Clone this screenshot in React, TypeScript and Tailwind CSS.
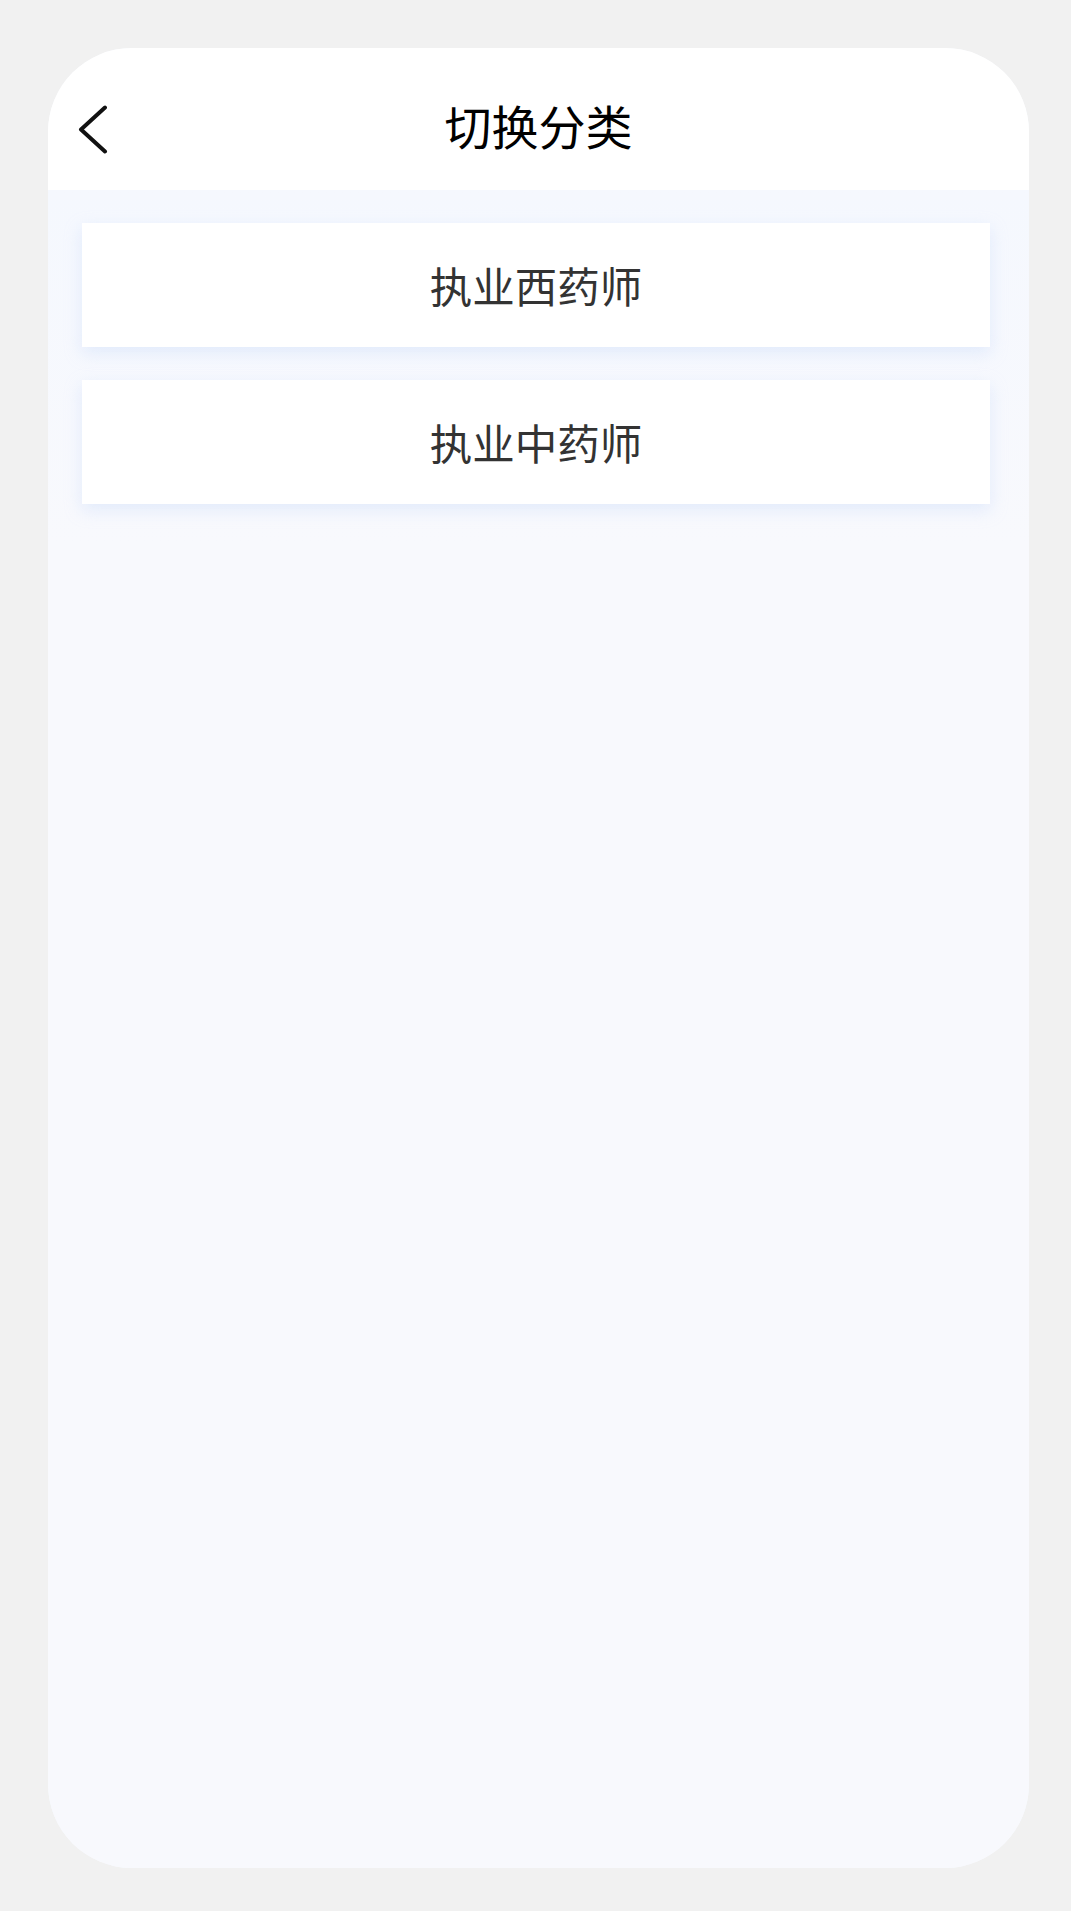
export default function App() {
  const items = ["执业西药师", "执业中药师"];

  return (
    <div
      className="flex min-h-[1911px] w-full bg-[#f1f1f1] px-[48px] py-[48px]"
      style={{ fontFamily: '"Noto Sans CJK SC", "Noto Sans", sans-serif' }}
    >
      <div className="flex h-[1820px] w-[981px] shrink-0 flex-col overflow-hidden rounded-[84px] bg-[#f7f9fe]">
        {/* header */}
        <div className="relative flex h-[142px] shrink-0 items-center justify-center bg-white">
          <button type="button" className="absolute left-[30px] top-[57px] flex h-[50px] w-[32px] items-center justify-center">
            <svg width="32" height="50" viewBox="0 0 32 50" fill="none">
              <path d="M27 2.5 L3 24.5 L27 46.5" stroke="#111" strokeWidth="4" strokeLinecap="round" strokeLinejoin="round" />
            </svg>
          </button>
          <h1 className="pt-[10px] text-[47px] leading-none text-black">切换分类</h1>
        </div>

        {/* list */}
        <div className="flex flex-col gap-[33px] bg-gradient-to-b from-[#f5f8fe] to-[#f8f9fd] pb-[40px] pl-[34px] pr-[39px] pt-[33px]">
          {items.map((item) => (
            <div
              key={item}
              className="flex h-[124px] items-center justify-center bg-white text-[42.5px] leading-none text-[#333] shadow-[0_6px_16px_rgba(185,208,248,0.35)]"
            >
              {item}
            </div>
          ))}
        </div>
        <div className="flex-1 bg-[#f8f9fd]" />
      </div>
    </div>
  );
}
